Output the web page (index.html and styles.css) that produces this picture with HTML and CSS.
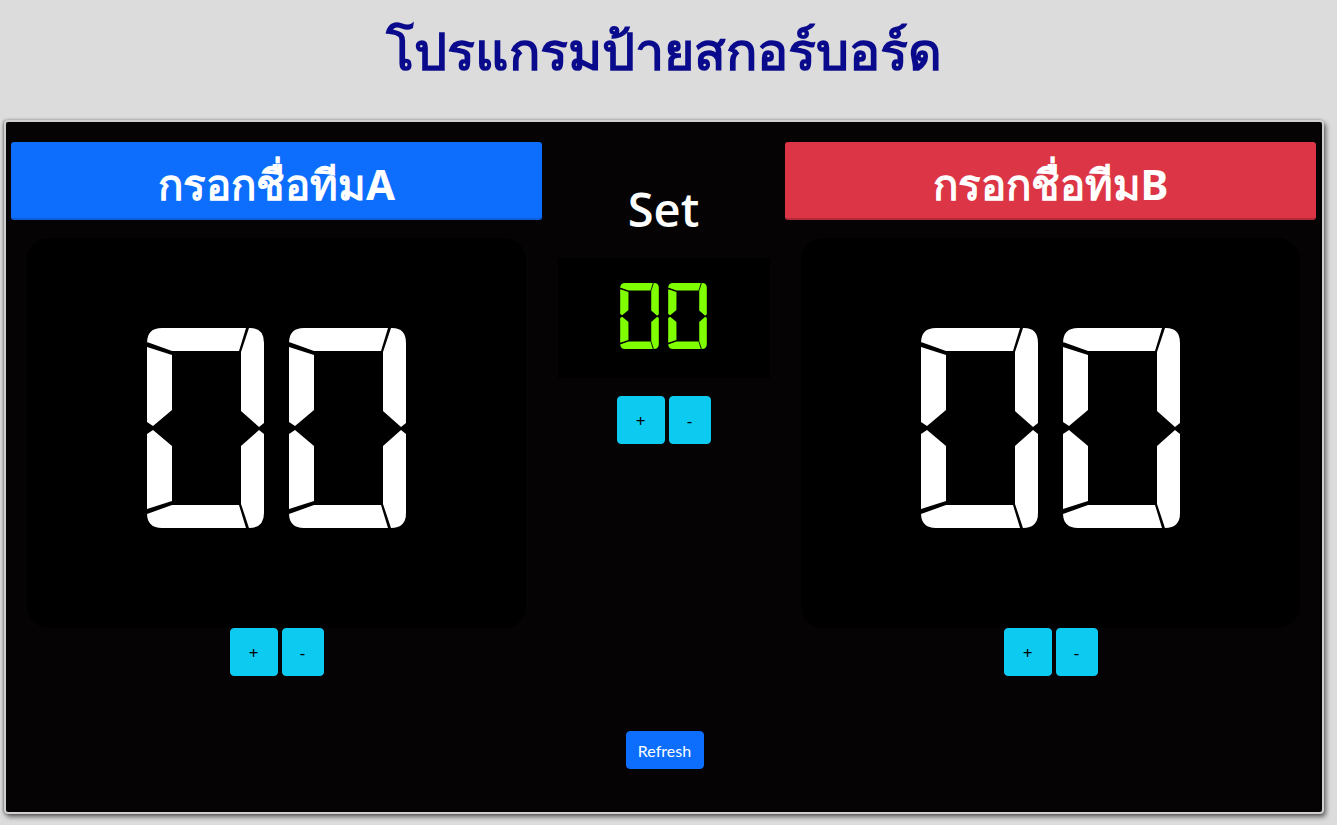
FILE: index.html
```html
<!DOCTYPE html>
<html lang="th">
<head>
<meta charset="utf-8">
<title>โปรแกรมป้ายสกอร์บอร์ด</title>
<link rel="stylesheet" href="styles.css">
</head>
<body>
<svg class="defs" width="0" height="0" aria-hidden="true">
  <defs>
    <g id="seg-zero">
      <path d="M0,15 Q0,0 15,0 L99,0 L92,23 L25,23 L0,14 Z"/>
      <path d="M102,0 L103,0 Q117,0 117,15 L117,95 L112,99 L94,83 L94,24 Z"/>
      <path d="M0,19 L25,27 L25,82 L6,98 L0,94 Z"/>
      <path d="M0,106 L6,102 L25,118 L25,173 L0,181 Z"/>
      <path d="M94,118 L112,102 L117,106 L117,185 Q117,200 102,200 L94,176 Z"/>
      <path d="M0,186 L25,177 L92,177 L99,200 L15,200 Q0,200 0,185 Z"/>
    </g>
  </defs>
</svg>
<h1 class="title">โปรแกรมป้ายสกอร์บอร์ด</h1>
<main class="board">
  <div class="columns">
    <section class="team">
      <div class="team-name team-a">กรอกชื่อทีมA</div>
      <div class="score-box">
        <div class="seven big">
          <svg class="digit" viewBox="0 0 117 200" role="img" aria-label="0"><title>0</title><use href="#seg-zero"/></svg>
          <svg class="digit" viewBox="0 0 117 200" role="img" aria-label="0"><title>0</title><use href="#seg-zero"/></svg>
        </div>
      </div>
      <div class="controls">
        <button class="btn-step">+</button>
        <button class="btn-step">-</button>
      </div>
    </section>

    <section class="center">
      <h2 class="set-label">Set</h2>
      <div class="set-box">
        <div class="seven small">
          <svg class="digit" viewBox="0 0 117 200" role="img" aria-label="0"><title>0</title><use href="#seg-zero"/></svg>
          <svg class="digit" viewBox="0 0 117 200" role="img" aria-label="0"><title>0</title><use href="#seg-zero"/></svg>
        </div>
      </div>
      <div class="controls set-controls">
        <button class="btn-step">+</button>
        <button class="btn-step">-</button>
      </div>
    </section>

    <section class="team">
      <div class="team-name team-b">กรอกชื่อทีมB</div>
      <div class="score-box">
        <div class="seven big">
          <svg class="digit" viewBox="0 0 117 200" role="img" aria-label="0"><title>0</title><use href="#seg-zero"/></svg>
          <svg class="digit" viewBox="0 0 117 200" role="img" aria-label="0"><title>0</title><use href="#seg-zero"/></svg>
        </div>
      </div>
      <div class="controls">
        <button class="btn-step">+</button>
        <button class="btn-step">-</button>
      </div>
    </section>
  </div>
  <div class="footer">
    <button class="btn-refresh">Refresh</button>
  </div>
</main>
</body>
</html>
```

FILE: styles.css
```css
* { box-sizing: border-box; }

html, body {
  margin: 0;
  padding: 0;
  background: #dcdcdc;
}

body {
  font-family: "Noto Sans", "Open Sans", sans-serif;
  height: 825px;
  overflow: hidden;
}

.defs { position: absolute; width: 0; height: 0; }

.title {
  margin: 0;
  padding-top: 15px;
  height: 120px;
  text-align: center;
  color: #0a0a8c;
  font-size: 52px;
  font-weight: 700;
  line-height: 70px;
  padding-right: 10px;
}

.board {
  margin-left: 4px;
  width: 1320px;
  height: 694px;
  background: #050304;
  border: 2px solid #d0d0d0;
  border-radius: 4px;
  box-shadow: 2px 3px 5px rgba(0,0,0,0.55), -1px 0 3px rgba(0,0,0,0.35);
  padding: 20px 6px 0 5px;
}

.columns {
  display: grid;
  grid-template-columns: 531px 243px 531px;
}

.team {
  display: flex;
  flex-direction: column;
  align-items: center;
}

.team-name {
  width: 100%;
  height: 78px;
  border-radius: 3px;
  color: #fff;
  font-weight: 700;
  font-size: 42px;
  line-height: 1;
  display: flex;
  align-items: center;
  justify-content: center;
  padding-top: 8px;
}

.team-a { background: #0d6efd; border-bottom: 2px solid #0b5ed7; }
.team-b { background: #dc3545; border-bottom: 2px solid #b02a37; }

.score-box {
  margin-top: 18px;
  width: 499px;
  height: 390px;
  background: #000;
  border-radius: 22px;
  display: flex;
  align-items: center;
  justify-content: center;
  padding-bottom: 10px;
}

.seven {
  display: flex;
}

.seven.big { gap: 25px; }
.seven.big .digit { width: 117px; height: 200px; fill: #fff; }

.seven.small { gap: 9px; }
.seven.small .digit { width: 39px; height: 66px; fill: #7fff00; }

.controls {
  display: flex;
  gap: 4px;
  justify-content: center;
}

.btn-step {
  background: #0dcaf0;
  border: 1px solid #0dcaf0;
  border-radius: 4px;
  color: #000;
  font-family: "Noto Sans", "Open Sans", sans-serif;
  font-size: 17px;
  height: 48px;
  width: 48px;
  padding: 0;
  cursor: pointer;
}

.btn-step + .btn-step { width: 42px; }

.center {
  display: flex;
  flex-direction: column;
  align-items: center;
}

.set-label {
  margin: 37px 0 0;
  color: #fff;
  font-family: "Open Sans", "Noto Sans", sans-serif;
  font-weight: 600;
  font-size: 47px;
  line-height: 60px;
  height: 60px;
}

.set-box {
  margin-top: 19px;
  width: 212px;
  height: 120px;
  background: #000;
  display: flex;
  align-items: center;
  justify-content: center;
  padding-bottom: 5px;
}

.set-controls { margin-top: 18px; }

.footer {
  display: flex;
  justify-content: center;
  margin-top: 55px;
  padding-left: 2px;
}

.btn-refresh {
  background: #0d6efd;
  border: 1px solid #0d6efd;
  border-radius: 4px;
  color: #fff;
  font-family: "Lato", "Noto Sans", sans-serif;
  font-size: 16px;
  height: 38px;
  width: 78px;
  padding: 0;
  cursor: pointer;
}
```
